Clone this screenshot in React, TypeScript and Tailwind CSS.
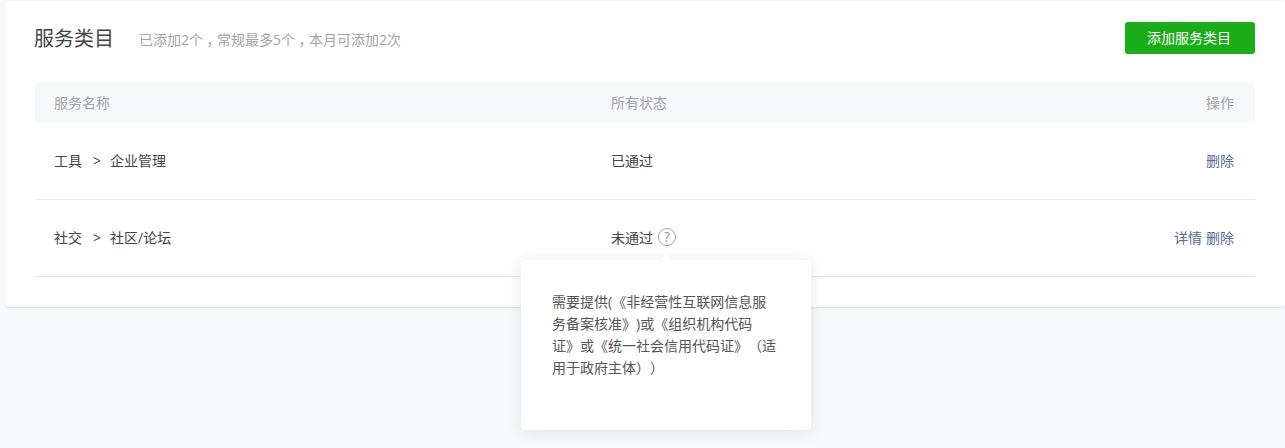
const Comma = () => <span className="px-[3.5px] [font-feature-settings:'halt']">，</span>;

export default function App() {
  return (
    <div className="w-full h-[448px] bg-[#f8f9fb] pl-[5px] pt-[1px] overflow-hidden font-['Open_Sans','Noto_Sans_CJK_SC',sans-serif] [text-spacing-trim:space-all]">
      <div className="h-[306px] bg-white rounded-[4px] shadow-[0_1px_2px_rgba(0,0,0,0.12)] px-[30px]">
        <div className="h-[82px] flex items-start justify-between">
          <div className="flex items-center h-[30px] mt-[23px] -ml-[1px]">
            <span className="text-[20px] leading-[30px] text-[#444444]">服务类目</span>
            <span className="text-[14px] leading-[30px] text-[#a3a3a3] ml-[25px] pt-[2px]">已添加2个<Comma />常规最多5个<Comma />本月可添加2次</span>
          </div>
          <button className="w-[130px] h-[32px] mt-[21px] pr-[2px] bg-[#1aad19] rounded-[3px] text-white text-[14px] leading-[30px] text-center">添加服务类目</button>
        </div>
        <div className="h-[40px] bg-[#f7f8fa] flex items-center pl-[19px] pr-[21px] pb-[2px] text-[14px] text-[#a3a3a3]">
          <div className="w-[557px]">服务名称</div>
          <div className="flex-1">所有状态</div>
          <div>操作</div>
        </div>
        <div className="h-[77px] border-b border-[#e7e7eb] flex items-center pl-[19px] pr-[21px] pb-[2px] text-[14px] text-[#444444]">
          <div className="w-[557px]">工具<span className="ml-[11px] mr-[9px]">&gt;</span>企业管理</div>
          <div className="flex-1">已通过</div>
          <a className="text-[#576b95]">删除</a>
        </div>
        <div className="h-[77px] border-b border-[#e7e7eb] flex items-center pl-[19px] pr-[21px] pb-[2px] text-[14px] text-[#444444]">
          <div className="w-[557px]">社交<span className="ml-[11px] mr-[9px]">&gt;</span>社区/论坛</div>
          <div className="flex-1 flex items-center relative">
            <span>未通过</span>
            <span className="ml-[5px] w-[18px] h-[18px] rounded-full border border-[#a8a8a8] text-[#999999] text-[14px] leading-[16px] text-center">?</span>
            <div className="absolute left-[-90px] top-[33px] w-[290px] h-[170px] bg-white rounded-[4px] shadow-[0_2px_16px_rgba(0,0,0,0.1)] pt-[31px] pl-[31px] pr-[34px] text-[14px] leading-[22px] text-[#555555] z-10">
              <span className="absolute left-[139px] top-[-6px] w-0 h-0 border-x-[6px] border-x-transparent border-b-[6px] border-b-white"></span>
              需要提供(《非经营性互联网信息服务备案核准》)或《组织机构代码证》或《统一社会信用代码证》（适用于政府主体））
            </div>
          </div>
          <div className="flex gap-[4px] text-[#576b95]"><a>详情</a><a>删除</a></div>
        </div>
      </div>
    </div>
  );
}
